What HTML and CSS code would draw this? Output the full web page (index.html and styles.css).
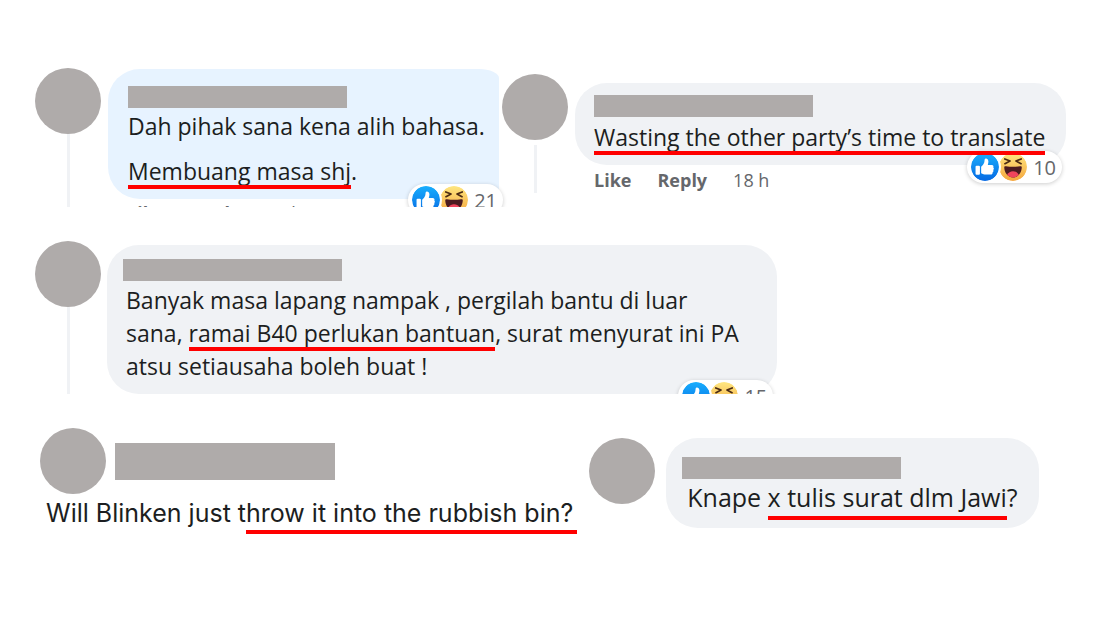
FILE: index.html
```
<!DOCTYPE html>
<html lang="ms">
<head>
    <meta charset="UTF-8">
    <meta name="viewport" content="width=device-width, initial-scale=1.0">
    <title>Comments</title>
    <link rel="stylesheet" href="styles.css">
</head>
<body>

    <!-- shared reaction icons -->
    <svg class="defs" aria-hidden="true">
        <defs>
            <linearGradient id="blue" x1="0" y1="0" x2="0" y2="1">
                <stop offset="0" stop-color="#18aefd"/>
                <stop offset="1" stop-color="#0769e3"/>
            </linearGradient>
            <linearGradient id="yellow" x1="0" y1="0" x2="0" y2="1">
                <stop offset="0" stop-color="#fee680"/>
                <stop offset="1" stop-color="#f5a63d"/>
            </linearGradient>
        </defs>
        <symbol id="like" viewBox="0 0 16 16">
            <circle cx="8" cy="8" r="8" fill="url(#blue)"/>
            <path d="M3.2 7.3h1.3c.4 0 .6.2.6.6v3.9c0 .4-.2.6-.6.6H3.2c-.4 0-.6-.2-.6-.6V7.9c0-.4.2-.6.6-.6zM5.8 7.8c.8-.5 1.5-1.5 1.8-2.5.1-.5.1-1.1.2-1.6.1-.5.5-.7.9-.6 1 .2 1.4 1.2 1.2 2.3l-.3 1.4h2.3c.8 0 1.2.8.8 1.4.5.5.5 1.1 0 1.5.3.5.1 1.1-.4 1.4.1.8-.3 1.2-1 1.2H8.5c-1 0-1.8-.2-2.7-.7z" fill="#fff"/>
        </symbol>
        <symbol id="haha" viewBox="0 0 16 16">
            <circle cx="8" cy="8" r="8" fill="url(#yellow)"/>
            <path d="M3 8.2c0-.5.4-.7 1-.6 2.6.4 5.4.4 8 0 .6-.1 1 .1 1 .6 0 3-2 5.8-5 5.8s-5-2.8-5-5.8z" fill="#4b1b20"/>
            <path d="M4.7 12.4c.6-1.3 1.9-2 3.3-2s2.7.7 3.3 2c-.9 1-2 1.6-3.3 1.6s-2.4-.6-3.3-1.6z" fill="#f0445c"/>
            <path d="M3.3 3.4l3 1.2-2.9 1.5M12.7 3.4l-3 1.2 2.9 1.5" fill="none" stroke="#4b2b14" stroke-width="1" stroke-linecap="round" stroke-linejoin="round"/>
        </symbol>
    </svg>

    <main class="board">
        <div class="row">
            <article class="comment comment-first cropped">
                <div class="side">
                    <div class="avatar"></div>
                    <div class="thread"></div>
                </div>
                <div class="content">
                    <div class="bubble highlighted">
                        <div class="name"></div>
                        <p>Dah pihak sana kena alih bahasa.</p>
                        <p><span class="mark">Membuang masa shj</span>.</p>
                        <div class="reactions">
                            <svg class="icon"><use href="#like"/></svg>
                            <svg class="icon"><use href="#haha"/></svg>
                            <span>21</span>
                        </div>
                    </div>
                    <div class="actions">
                        <button>Like</button>
                        <button>Reply</button>
                        <span>18 h</span>
                    </div>
                </div>
            </article>

            <article class="comment comment-english">
                <div class="side">
                    <div class="avatar"></div>
                    <div class="thread"></div>
                </div>
                <div class="content">
                    <div class="bubble">
                        <div class="name"></div>
                        <p lang="en"><span class="mark">Wasting the other party’s time to translate</span></p>
                        <div class="reactions">
                            <svg class="icon"><use href="#like"/></svg>
                            <svg class="icon"><use href="#haha"/></svg>
                            <span>10</span>
                        </div>
                    </div>
                    <div class="actions">
                        <button>Like</button>
                        <button>Reply</button>
                        <span>18 h</span>
                    </div>
                </div>
            </article>
        </div>

        <div class="row">
            <article class="comment comment-long cropped">
                <div class="side">
                    <div class="avatar"></div>
                    <div class="thread"></div>
                </div>
                <div class="content">
                    <div class="bubble">
                        <div class="name"></div>
                        <p>Banyak masa lapang nampak , pergilah bantu di luar<br>
                        sana, <span class="mark">ramai B40 perlukan bantuan</span>, surat menyurat ini PA<br>
                        atsu setiausaha boleh buat !</p>
                        <div class="reactions">
                            <svg class="icon"><use href="#like"/></svg>
                            <svg class="icon"><use href="#haha"/></svg>
                            <span>15</span>
                        </div>
                    </div>
                </div>
            </article>
        </div>

        <div class="row">
            <article class="tweet">
                <div class="tweet-head">
                    <div class="avatar"></div>
                    <div class="name"></div>
                </div>
                <p lang="en">Will Blinken just t<span class="mark">hrow it into the rubbish bin?</span></p>
            </article>

            <article class="comment comment-last">
                <div class="side">
                    <div class="avatar"></div>
                </div>
                <div class="content">
                    <div class="bubble">
                        <div class="name"></div>
                        <p>Knape <span class="mark">x tulis surat dlm Jawi</span>?</p>
                    </div>
                </div>
            </article>
        </div>
    </main>

</body>
</html>
```
FILE: styles.css
```
:root {
    --bubble-color: #f0f2f5;
    --highlight-color: #e7f3ff;
    --cover-color: #afabaa;
    --text-color: #1c1e21;
    --muted-color: #65676b;
    --mark-color: #ff0000;
}

* {
    box-sizing: border-box;
}

body {
    margin: 0;
    background-color: #fff;
    color: var(--text-color);
    font-family: "Open Sans", "Noto Sans", sans-serif;
    font-size: 23px;
    line-height: 33px;
}

p {
    margin: 0;
    white-space: nowrap;
}

.defs {
    position: absolute;
    width: 0;
    height: 0;
}

.board {
    display: flex;
    flex-direction: column;
    gap: 34px;
    min-height: 100vh;
    padding: 68px 34px 40px 35px;
}

.row {
    display: flex;
    align-items: flex-start;
    gap: 3px;
}

.comment {
    display: flex;
    gap: 7px;
}

.comment-first {
    flex: 464;
    max-height: 139px;
}

.comment-english {
    flex: 564;
    margin-top: 6px;
}

.comment-long {
    width: 72%;
    gap: 6px;
}

.comment-last {
    width: 450px;
    margin: 10px 0 0 13px;
    gap: 11px;
}

/* cut off at the bottom, sides stay visible */
.cropped {
    overflow-x: visible;
    overflow-y: clip;
}

.side {
    display: flex;
    flex-direction: column;
    align-items: center;
}

.avatar {
    width: 66px;
    height: 66px;
    flex-shrink: 0;
    border-radius: 50%;
    background-color: var(--cover-color);
}

.thread {
    width: 3px;
    flex: 1;
    background-color: var(--bubble-color);
}

.content {
    flex: 1;
    min-width: 0;
}

.bubble {
    position: relative;
    padding: 17px 12px 11px 20px;
    border-radius: 32px;
    background-color: var(--bubble-color);
}

.highlighted {
    margin-top: 1px;
    border-radius: 32px 20px 0 32px / 32px 9px 0 32px;
    background-color: var(--highlight-color);
}

.highlighted p + p {
    margin-top: 12px;
}

.name {
    width: 219px;
    height: 22px;
    margin-bottom: 2px;
    background-color: var(--cover-color);
}

.mark {
    position: relative;
    z-index: 2;
}

.mark::after {
    content: "";
    position: absolute;
    left: 0;
    right: 0;
    bottom: -2px;
    height: 4px;
    background-color: var(--mark-color);
}

.reactions {
    position: absolute;
    right: 4px;
    bottom: -18px;
    display: flex;
    align-items: center;
    height: 32px;
    padding: 0 6px 0 2px;
    border-radius: 16px;
    background-color: #fff;
    box-shadow: 0 1px 4px rgba(0, 0, 0, 0.2);
    color: var(--muted-color);
    font-size: 20px;
}

.reactions span {
    margin-left: 8px;
}

.icon {
    width: 32px;
    height: 32px;
    margin-right: -4px;
    border: 2px solid #fff;
    border-radius: 50%;
}

.icon:first-child {
    position: relative;
    z-index: 1;
}

.actions {
    display: flex;
    gap: 26px;
    padding: 2px 0 0 19px;
    color: var(--muted-color);
    font-size: 18px;
    line-height: 26px;
}

.actions button {
    padding: 0;
    border: none;
    background: none;
    color: inherit;
    font: inherit;
    font-weight: 700;
    cursor: pointer;
}

.highlighted .reactions {
    right: -4px;
    bottom: -17px;
}

.highlighted + .actions {
    padding-top: 1px;
}

.comment-english .content {
    padding-top: 9px;
}

.comment-english .bubble {
    padding: 12px 12px 11px 19px;
}

.comment-english .name {
    margin-bottom: 4px;
}

.comment-english .thread {
    margin-top: 5px;
}

.comment-long .content {
    padding-top: 4px;
}

.comment-long .bubble {
    padding: 14px 12px 11px 16px;
}

.comment-long .name {
    margin-bottom: 3px;
}

.comment-long p {
    padding-left: 3px;
}

.comment-last .bubble {
    padding: 19px 12px 14px 16px;
}

.comment-last p {
    padding-left: 5px;
    font-size: 25px;
}

.comment-last .mark::after {
    bottom: -6px;
}

.tweet {
    padding-left: 5px;
    font-family: Inter, sans-serif;
    font-size: 25px;
}

.tweet-head {
    display: flex;
    gap: 9px;
    align-items: center;
}

.tweet-head .name {
    width: 220px;
    height: 37px;
    margin: 0;
}

.tweet p {
    padding: 3px 0 0 6px;
}

.tweet .mark::after {
    right: -4px;
    bottom: -6px;
}
```
